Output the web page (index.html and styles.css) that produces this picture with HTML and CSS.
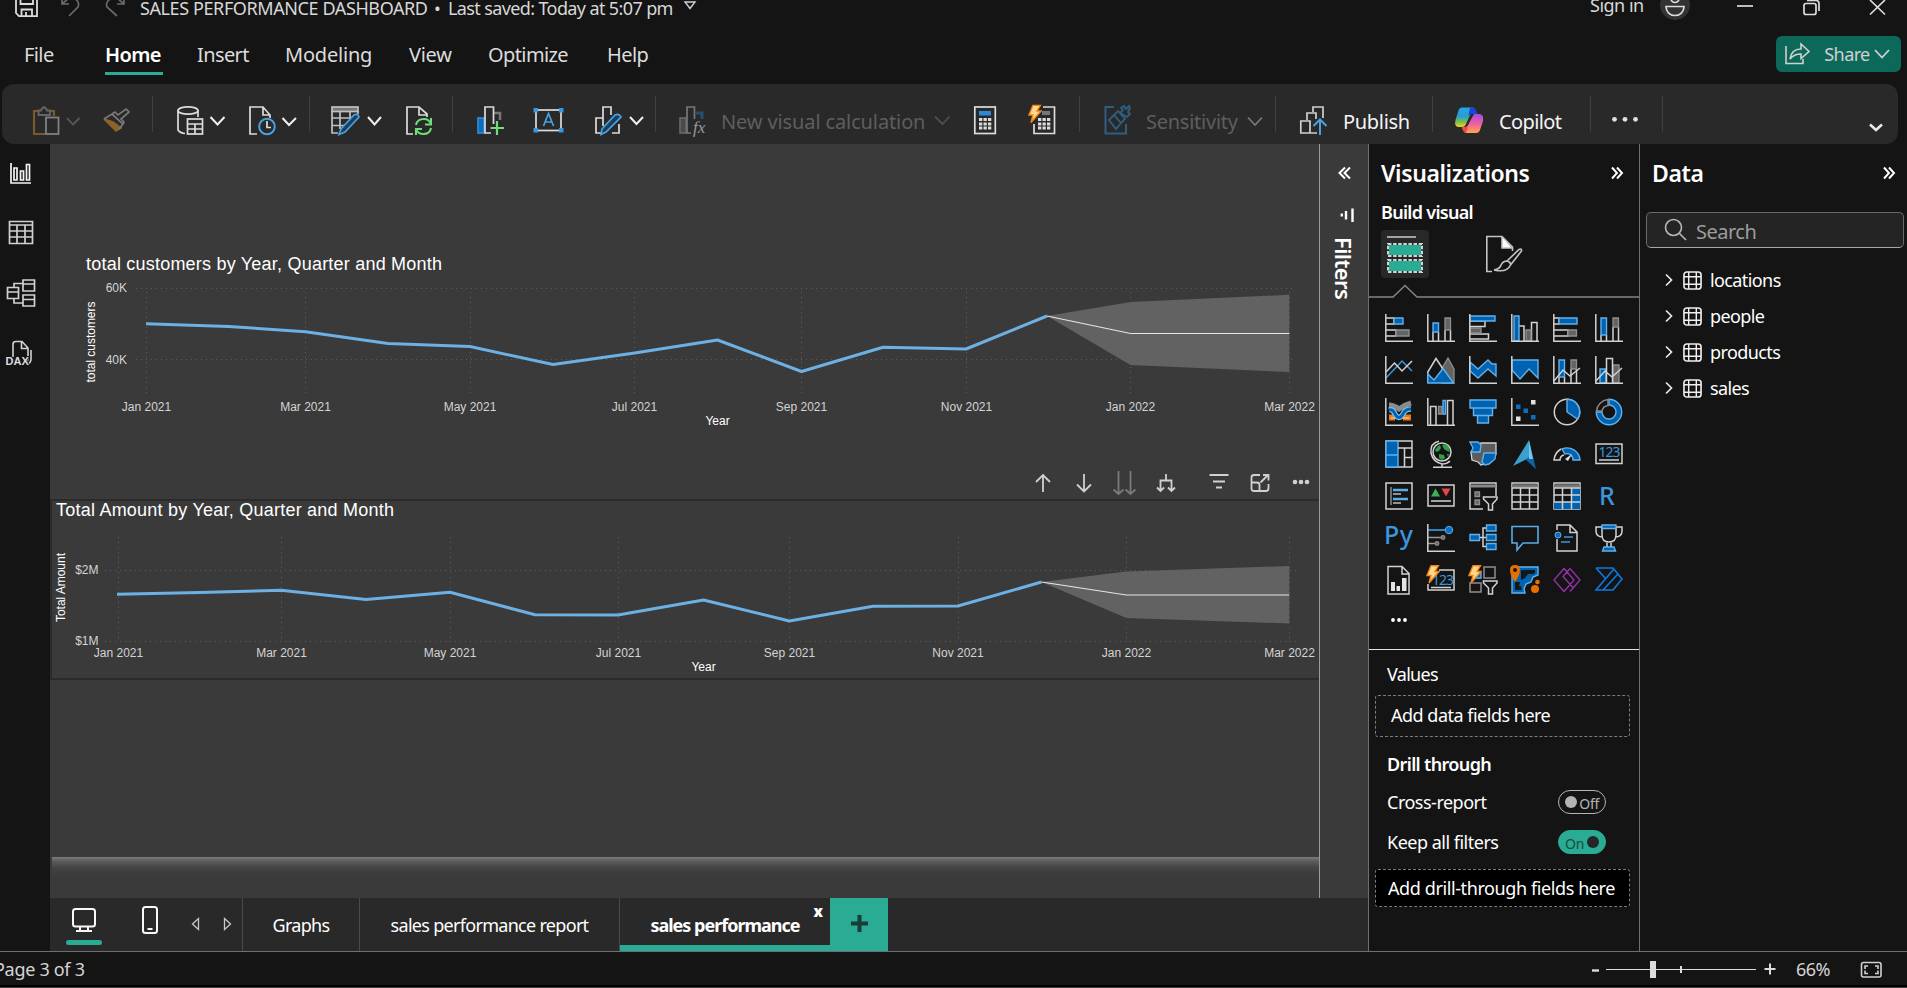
FILE: index.html
```html
<!DOCTYPE html>
<html lang="en">
<head>
<meta charset="utf-8">
<title>Sales Performance Dashboard</title>
<link rel="stylesheet" href="styles.css">
</head>
<body>
<svg class="defs" width="0" height="0">
  <defs>
    <symbol id="axis" viewBox="0 0 28 28"><path class="w" d="M.8 0V27.2H28"/></symbol>
    <symbol id="bolt" viewBox="0 0 14 19"><path d="M5 .7H12.5L9 6.5H13L3 18L5 10.500H1Z" fill="#ffd98c" stroke="#f0861a" stroke-width="1.4"/></symbol>
    <symbol id="tbl" viewBox="0 0 20 20"><rect x="1" y="1" width="18" height="18" rx="3" fill="none" stroke="#f0f0f0" stroke-width="1.7"/><path d="M1 6H19M1 14H19M6 1V19M14 1V19" stroke="#f0f0f0" stroke-width="1.5" fill="none"/></symbol>
    <linearGradient id="cpA" x1="0" y1="0" x2="0" y2="1"><stop offset="0" stop-color="#22a7f0"/><stop offset=".45" stop-color="#2b9bd0"/><stop offset=".75" stop-color="#7cc242"/><stop offset="1" stop-color="#f5d023"/></linearGradient>
    <linearGradient id="cpB" x1="0" y1="0" x2="0" y2="1"><stop offset="0" stop-color="#a04be8"/><stop offset=".5" stop-color="#ee5fa0"/><stop offset="1" stop-color="#ffa552"/></linearGradient>
  </defs>
</svg>
<div class="app">

  <header class="titlebar">
    <svg width="140" height="24" viewBox="0 0 140 24">
      <g fill="none" stroke="#dcdcdc" stroke-width="1.8"><path d="M16 -2V13L19 16.200H37V-2"/><path d="M20.500 -2V4H33V-2M21.500 16V9.500H32V16M26 12V16"/></g>
      <g fill="none" stroke="#6a6a6a" stroke-width="1.700"><path d="M62 -2V4H69M62 4L69 -2C76 -3 80 2 78 7L69 16"/><path d="M124 -2V4H117M124 4L117 -2C110 -3 105 2 107 7L117 16"/></g>
    </svg>
    <span class="doc-title">SALES PERFORMANCE DASHBOARD</span>
    <span class="doc-dot">•</span>
    <span class="doc-saved">Last saved: Today at 5:07 pm</span>
    <svg width="20" height="24" viewBox="680 0 20 24"><path d="M685 2H695L690 8.500Z" fill="none" stroke="#cfcfcf" stroke-width="1.400"/></svg>
    <span class="sign-in">Sign in</span>
    <svg width="257" height="24" viewBox="1650 0 257 24" fill="none" stroke="#dcdcdc" stroke-width="1.700">
      <circle cx="1675" cy="5" r="15" fill="#333" stroke="none"/><circle cx="1675" cy="-1.500" r="4"/><path d="M1666 6.500H1684C1684 12 1680 15.500 1675 15.500S1666 12 1666 6.500Z"/>
      <path d="M1737 6H1753"/><rect x="1804" y="3.500" width="12" height="11" rx="2"/><path d="M1807 .5H1816Q1819 .5 1819 3.500V11"/><path d="M1870 0L1885 14.500M1885 0L1870 14.500"/>
    </svg>
  </header>

  <nav class="menubar">
    <a class="m-file">File</a><a class="m-home">Home</a><a class="m-insert">Insert</a><a class="m-model">Modeling</a><a class="m-view">View</a><a class="m-opt">Optimize</a><a class="m-help">Help</a>
    <button class="share">
      <svg width="26" height="24" viewBox="0 0 26 24" fill="none" stroke="#d0d0d0" stroke-width="1.600"><path d="M1 4V21.500H18V17"/><path d="M5 17C6 10 10 7 16 7V2L24 9.500L16 16.500V12C11 12 8 13 5 17Z"/></svg>
      <span>Share</span>
      <svg width="18" height="12" viewBox="0 0 18 12" fill="none" stroke="#d0d0d0" stroke-width="1.800"><path d="M2 2L9 9.500L16 2"/></svg>
    </button>
  </nav>

  <div class="ribbon">
    <svg width="88" height="60" viewBox="2 84 88 60" fill="none" stroke-width="1.800">
      <path d="M38 111H34V134H45M50 111H54V116" stroke="#7a5a2a" stroke-width="2.200"/><path d="M38.500 115V110.500H41Q44 104 47 110.500H50V115Z" stroke="#666"/><rect x="46" y="117.500" width="12.500" height="16.500" stroke="#808080"/><path d="M67 118L73 124.500L79.500 118" stroke="#5a5a5a"/></svg>
    <svg width="62" height="60" viewBox="90 84 62 60" fill="none" stroke-width="1.700"><path d="M104 119L113 122L121 128L116 131Z" fill="#8a6428" stroke="#8a6428"/><path d="M104 119L112 114L123 124L119 129M112 114L115 112L118 115L126 109L129 112L121 119L124 122L122 125" stroke="#7a7a7a"/></svg>
    <i class="sep"></i>
    <svg width="82" height="60" viewBox="153 84 82 60" fill="none" stroke="#dcdcdc" stroke-width="1.700"><ellipse cx="188" cy="110.500" rx="10" ry="3.700"/><path d="M178 110.500V130Q180 133 185 133.500M198 110.500V117"/><rect x="187.500" y="119" width="15" height="15"/><path d="M187.500 124H202.500M187.500 129H202.500M195 124V134"/><path d="M210.500 117L217.500 124.500L224.500 117" stroke="#f0f0f0" stroke-width="2"/></svg>
    <svg width="74" height="60" viewBox="235 84 74 60" fill="none" stroke="#dcdcdc" stroke-width="1.700"><path d="M257 134H250V107H263L270 115V118M263 107V115H270"/><circle cx="267" cy="126.500" r="7.800" stroke="#4aa0e0" stroke-width="2"/><path d="M267 121V127.500H271" stroke="#dcdcdc"/><path d="M282.500 118L289 125L296 118" stroke="#f0f0f0" stroke-width="2"/></svg>
    <i class="sep"></i>
    <svg width="80" height="60" viewBox="310 84 80 60" fill="none" stroke="#c0c0c0" stroke-width="1.700"><rect x="332" y="107" width="26" height="4.500" fill="#777"/><path d="M332 111V133H338M332 118H352M332 125.500H345M340 112V129M350 112V120M358 111V114"/><path d="M341 129L354 115Q358 113 359 117L345 132L339 134.500Z" fill="#1d3f5c" stroke="#4aa0e0"/><path d="M368 117L374.500 124.500L381 117" stroke="#f0f0f0" stroke-width="2"/></svg>
    <svg width="62" height="60" viewBox="390 84 62 60" fill="none" stroke="#dcdcdc" stroke-width="1.700"><path d="M413 134H407V107H419L427 114V117M419 107V115H427"/><path d="M416 125Q417 119 424 119Q429 119 431 124M431 118V124.500H425M431 128Q430 134 423.500 134Q418 134 416 129.500M416 135V129H422" stroke="#6fdd78" stroke-width="2"/></svg>
    <i class="sep"></i>
    <svg width="65" height="60" viewBox="453 84 65 60" fill="none" stroke-width="1.700"><rect x="478" y="118" width="6" height="15" fill="#0f6cbd" stroke="#2d8ad8"/><path d="M494 113H500V120" stroke="#777" stroke-width="2.500"/><path d="M491 133H485V107H493.500V124" stroke="#dcdcdc"/><path d="M497 121V135M490.500 128H504" stroke="#6fdd78" stroke-width="2.200"/></svg>
    <svg width="62" height="60" viewBox="518 84 62 60" fill="none" stroke-width="1.700"><rect x="536" y="110" width="25" height="20.500" stroke="#dcdcdc"/><path d="M543.500 126L548.500 113.500L553.500 126M545 122H552" stroke="#4aa0e0"/><g fill="#3a96dd"><rect x="533.500" y="108" width="4.500" height="4.500"/><rect x="559" y="108" width="4.500" height="4.500"/><rect x="533.500" y="128" width="4.500" height="4.500"/><rect x="559" y="128" width="4.500" height="4.500"/></g></svg>
    <svg width="75" height="60" viewBox="580 84 75 60" fill="none" stroke="#dcdcdc" stroke-width="1.700"><path d="M601 133H596V118H603V107H611V115M612 133H619V124M603 118V126"/><path d="M602 129L615 115Q619 113 621 117L606 132L601 134.500Z" fill="#1d3f5c" stroke="#4aa0e0"/><path d="M630 117L636.500 124L643 117" stroke="#f0f0f0" stroke-width="2"/></svg>
    <i class="sep"></i>
    <svg width="65" height="60" viewBox="656 84 65 60" fill="none" stroke="#777" stroke-width="1.700"><rect x="680" y="118" width="6" height="15" fill="#4a4a4a" stroke="#666"/><path d="M691 133H687V107H694.500V119"/><path d="M696 113H702V119" stroke="#235070" stroke-width="3"/><text x="693" y="133" class="fx">fx</text></svg>
    <span class="r-text r-calc">New visual calculation</span>
    <svg width="30" height="60" viewBox="930 84 30 60" fill="none" stroke="#4f4f4f" stroke-width="1.800"><path d="M935 116.500L942.500 124L949.500 116.500"/></svg>
    <svg width="52" height="60" viewBox="960 84 52 60"><rect x="974.800" y="107" width="20.500" height="26.500" fill="none" stroke="#dcdcdc" stroke-width="1.700"/><rect x="979" y="111" width="12" height="4.500" fill="#2d8ad8"/><path d="M979 119.500H992M979 124H992M979 128H992" stroke="#dcdcdc" stroke-width="3" stroke-dasharray="3.300 1.200"/></svg>
    <svg width="67" height="60" viewBox="1012 84 67 60"><path d="M1043 107H1054.500V133.500H1034V124" fill="none" stroke="#dcdcdc" stroke-width="1.700"/><path d="M1042 113H1050" stroke="#777" stroke-width="4"/><path d="M1038 119.500H1051M1038 124H1051M1038 128H1051" stroke="#dcdcdc" stroke-width="3" stroke-dasharray="3.300 1.200"/><use href="#bolt" x="1028" y="104.500" width="14" height="19"/></svg>
    <i class="sep"></i>
    <svg width="66" height="60" viewBox="1080 84 66 60" fill="none" stroke="#2f5f80" stroke-width="2"><path d="M1114 107H1105.500V133.500H1126V124"/><path d="M1109 120L1114 115L1121 123L1116 129ZM1114 115L1118 111L1125 119L1121 123M1120 113L1123 110L1121 108L1124 106L1126 109L1129 106L1130 108L1128 112L1130 114L1127 117Z" stroke-width="1.800"/></svg>
    <span class="r-text r-sens">Sensitivity</span>
    <svg width="32" height="60" viewBox="1243 84 32 60" fill="none" stroke="#777" stroke-width="1.800"><path d="M1248 117.500L1255 125L1262 117.500"/></svg>
    <i class="sep"></i>
    <svg width="67" height="60" viewBox="1276 84 67 60" fill="none" stroke="#d0d0d0" stroke-width="1.700"><path d="M1313 112V107H1323V118M1307 120V113H1316V119M1300.800 121H1310V133H1300.800ZM1310 133H1317"/><path d="M1320 135V120M1313.500 126L1320 119.500L1326.500 126" stroke="#4aa0e0" stroke-width="2"/></svg>
    <span class="r-text r-pub">Publish</span>
    <i class="sep"></i>
    <svg width="66" height="60" viewBox="1433 84 66 60"><path d="M1462 107.500H1472Q1475 107.500 1476 112L1471 113L1466 124Q1465 127 1462 127H1458Q1454 126 1455.500 120L1458.500 110.500Q1459.500 107.500 1462 107.500Z" fill="url(#cpA)"/><path d="M1470 107.500H1473Q1476 108 1477.500 114H1472Q1468 114 1468 118Z" fill="#1548d0"/><path d="M1474 114H1480Q1484 115 1483 121L1480 130Q1479 133 1476 133H1466Q1463 132 1462 127Q1467 128 1468.500 124Z" fill="url(#cpB)"/><path d="M1462 127H1468L1466 133Q1463 132 1462 127Z" fill="#e8503a"/></svg>
    <span class="r-text r-cop">Copilot</span>
    <i class="sep"></i>
    <svg width="71" height="60" viewBox="1591 84 71 60" fill="#e0e0e0"><circle cx="1614.500" cy="119.300" r="2.400"/><circle cx="1625" cy="119.300" r="2.400"/><circle cx="1635.500" cy="119.300" r="2.400"/></svg>
    <i class="sep"></i>
    <svg width="232" height="60" viewBox="1663 84 232 60" fill="none" stroke="#e8e8e8" stroke-width="2.600"><path d="M1870 124.500L1876 130L1882 124.500"/></svg>
  </div>

  <main class="work">
    <aside class="rail">
      <svg width="50" height="58" viewBox="0 144 50 58" fill="none" stroke="#f4f4f4" stroke-width="1.700"><path d="M11 163V183H31"/><path d="M14 168H17V180H14ZM20.500 171H23.500V180H20.500ZM26.500 164.500H29.500V180H26.500Z"/></svg>
      <svg width="50" height="60" viewBox="0 202 50 60" fill="none" stroke="#d0d0d0" stroke-width="1.700"><path d="M9.500 221.500H32.500V243.500H9.500ZM9.500 225H32.500M9.500 231H32.500M9.500 237H32.500M17 225V243M25 225V243"/></svg>
      <svg width="50" height="62" viewBox="0 262 50 62" fill="none" stroke="#d0d0d0" stroke-width="1.700"><path d="M23 280H34.500V291H23ZM23 284H34.500M23 295H34.500V306H23ZM23 299.500H34.500M7.500 287.500H18.500V298.500H7.500ZM7.500 292H18.500M14 287V283.500H23M14 299V303H23"/></svg>
      <svg width="50" height="60" viewBox="0 324 50 60" fill="none" stroke="#d0d0d0" stroke-width="1.600"><path d="M13 357V344Q13 341.500 16 341.500H22L28 348V358Q28 362 25 363M21.500 342V348.500H28M31 350V359Q31 363 27 364.500"/><text x="5.500" y="364.500" class="dax">DAX</text></svg>
    </aside>

    <section class="center">
      <div class="stage">
        <div class="canvas">
          <svg class="chart" width="1269" height="355" viewBox="50 144 1269 355">
            <text class="c-title" x="86" y="270" textLength="356">total customers by Year, Quarter and Month</text>
            <path class="band" d="M1047 316L1130.500 302L1289.300 294.800V372L1130.500 365Z"/>
            <path class="grid" d="M136 288.500H1296M136 359.500H1296M146.500 292V397M305.500 292V397M470.500 292V397M634.500 292V397M801.500 292V397M966.500 292V397M1130.500 292V397M1289.500 292V397"/>
            <path class="series" d="M146 323.700L228.500 326.500L305.600 331.700L388 343.500L470 346.500L553 364.500L634.700 353L717.500 340L801.500 371.500L883 347.300L966 349L1047 316"/>
            <path class="fc" d="M1047 316L1130.500 333.500H1289.300"/>
            <g class="tick"><text x="127" y="292" class="end">60K</text><text x="127" y="364" class="end">40K</text>
            <text x="146.500" y="411">Jan 2021</text><text x="305.500" y="411">Mar 2021</text><text x="470" y="411">May 2021</text><text x="634.500" y="411">Jul 2021</text><text x="801.500" y="411">Sep 2021</text><text x="966.500" y="411">Nov 2021</text><text x="1130.500" y="411">Jan 2022</text><text x="1289.500" y="411">Mar 2022</text></g>
            <text class="axis-t" x="717.500" y="425">Year</text>
            <text class="axis-t" transform="translate(95 342) rotate(-90)" textLength="81">total customers</text>
          </svg>
          <svg class="chart picked" width="1269" height="181" viewBox="50 499 1269 181">
            <path d="M1319 500H51V679H1319" fill="none" stroke="#2b2b2b" stroke-width="2"/>
            <text class="c-title" x="56" y="516" textLength="338">Total Amount by Year, Quarter and Month</text>
            <path class="band" d="M1041.500 582L1126.300 571.500L1289.300 566V623.500L1126.300 618Z"/>
            <path class="grid" d="M105 570.500H1298M105 641.500H1298M118.500 537V642M281.500 537V642M450.500 537V642M618.500 537V642M789.500 537V642M958.500 537V642M1126.500 537V642M1289.500 537V642"/>
            <path class="series" d="M117 594.200L200 592.500L281 590.300L366 599.500L450 592.300L535 614.700L618 615L703.500 600L789.300 621L873 606.300L958 606L1041.500 582"/>
            <path class="fc" d="M1041.500 582L1126.300 595H1289.300"/>
            <g class="tick"><text x="98.500" y="574" class="end">$2M</text><text x="98.500" y="645" class="end">$1M</text>
            <text x="118.500" y="657">Jan 2021</text><text x="281.500" y="657">Mar 2021</text><text x="450" y="657">May 2021</text><text x="618.500" y="657">Jul 2021</text><text x="789.500" y="657">Sep 2021</text><text x="958" y="657">Nov 2021</text><text x="1126.500" y="657">Jan 2022</text><text x="1289.500" y="657">Mar 2022</text></g>
            <text class="axis-t" x="703.500" y="671">Year</text>
            <text class="axis-t" transform="translate(65 587.500) rotate(-90)" textLength="69">Total Amount</text>
          </svg>
          <svg class="hover-bar" width="290" height="30" viewBox="1025 468 290 30" fill="none" stroke="#d0d0d0" stroke-width="1.800">
            <path d="M1043 492V475M1036 482L1043 475L1050 482"/><path d="M1084 474V491M1077 484.500L1084 491.500L1091 484.500"/>
            <g stroke="#7a7a7a"><path d="M1118.500 471V494M1113.500 489.500L1118.500 494L1123.500 489.500M1130.500 471V494M1125.500 489.500L1130.500 494L1135.500 489.500"/></g>
            <path d="M1166 474V480.500M1160.500 491V480.500H1171.500V491M1157 487.500L1160.500 491L1164 487.500M1168 487.500L1171.500 491L1175 487.500"/>
            <path d="M1209.500 475H1228.500M1213 481.500H1225M1216 487.500H1222"/>
            <path d="M1260 475H1254Q1251.500 475 1251.500 477.500V488.500Q1251.500 491 1254 491H1266Q1268.500 491 1268.500 488V484M1251.500 482.500H1257Q1259.500 482.500 1259.500 485V491M1260.500 482.500L1268 475M1263 475H1268.500V480.500"/>
            <g fill="#d0d0d0" stroke="none"><circle cx="1295" cy="482" r="2.300"/><circle cx="1301" cy="482" r="2.300"/><circle cx="1307" cy="482" r="2.300"/></g>
          </svg>
          <div class="page-rest"></div>
          <div class="page-shadow"></div>
        </div>
        <aside class="filters">
          <svg width="48" height="93" viewBox="1320 144 48 93" fill="none" stroke="#fff" stroke-width="2"><path d="M1345 167.500L1339.500 173L1345 178.500M1350 167.500L1344.500 173L1350 178.500"/><path d="M1341.800 213.500V216.500M1346 211V219.500M1352.500 208.500V222" stroke-width="2.400"/></svg>
          <span class="filters-label">Filters</span>
        </aside>
      </div>
      <div class="tabs">
        <svg width="192" height="53" viewBox="50 898 192 53" fill="none" stroke="#f8f8f8" stroke-width="2"><rect x="73" y="909" width="22" height="17.500" rx="2.500"/><path d="M80 927V930M88 927V930M76 931H92"/><rect x="66" y="940" width="36" height="5" rx="2.500" fill="#2aab93" stroke="none"/><rect x="143" y="907" width="14" height="26" rx="2.500"/><path d="M147.500 929H152.500"/><g stroke-width="1.300" stroke="#c8c8c8"><path d="M198.500 918.500V929.500L192.500 924ZM224.500 918.500V929.500L230.500 924Z"/></g></svg>
        <span class="tab t1">Graphs</span>
        <span class="tab t2">sales performance report</span>
        <span class="tab t3 active">sales performance<b class="close">x</b></span>
        <span class="add"><svg width="58" height="53" viewBox="830 898 58 53"><path d="M859.500 915V932M851 923.500H868" stroke="#1b3d37" stroke-width="4"/></svg></span>
      </div>
    </section>

    <aside class="viz">
      <div class="pane-head"><h2 class="h-viz">Visualizations</h2><svg width="14" height="14" viewBox="0 0 14 14" fill="none" stroke="#fff" stroke-width="2"><path d="M2 1.500L7 7L2 12.500M7 1.500L12 7L7 12.500"/></svg></div>
      <h3 class="h-build">Build visual</h3>
      <svg width="270" height="78" viewBox="1369 224 270 78" fill="none">
        <rect x="1381" y="230" width="48" height="48" rx="4" fill="#282828"/>
        <path d="M1387 237H1416" stroke="#b0b0b0" stroke-width="1.800"/>
        <path d="M1389 245H1421V255H1389ZM1389 261H1421V271H1389Z" fill="#2aab93"/>
        <g stroke="#282828" stroke-width="2"><rect x="1388" y="244" width="34" height="12"/><rect x="1388" y="260" width="34" height="12"/></g>
        <g stroke="#d4d4d4" stroke-width="2" stroke-dasharray="3.500 1.600"><rect x="1388" y="244" width="34" height="12"/><rect x="1388" y="260" width="34" height="12"/></g>
        <g stroke="#c4c4c4" stroke-width="1.600"><path d="M1492 271.500H1486.800V236.500H1502L1512.500 247V251"/><path d="M1502 237V248H1512" fill="#fff"/><path d="M1507 261L1519 249.500Q1522 248 1521.500 251L1510.500 265M1507 261Q1511 262 1510.500 265Q1507 273 1494 270Q1500 269 1501 265Q1503 261 1507 261Z"/></g>
        <path d="M1369 297H1393L1405 285.500L1417 297H1639" stroke="#858585" stroke-width="1.500"/>
      </svg>
      <div class="gallery">
        <svg viewBox="0 0 28 28"><g><path class="e" d="M1 4H9V10H1M1 16H11V22H1"/><path class="b" d="M9 4H18V10H9Z"/><path class="g" d="M11 16H24V22H11Z"/></g><use href="#axis"/></svg>
        <svg viewBox="0 0 28 28"><path class="e" d="M6 18V27M11.500 18V27M18 16V27M23.500 16V27"/><path class="b" d="M6 9H11.500V18H6Z"/><path class="g" d="M18 4H23.500V16H18Z"/><use href="#axis"/></svg>
        <svg viewBox="0 0 28 28"><path class="e" d="M1 7H16V12.500H1M1 20H19.500V25H1"/><path class="g" d="M1 14H12V19H1Z"/><path class="b" d="M1 2H26V7H1Z"/><use href="#axis"/></svg>
        <svg viewBox="0 0 28 28"><path class="e" d="M8 12H13V27M20.500 27V8.500H26V27"/><path class="g" d="M15 16H20V27H15Z"/><path class="b" d="M3 2H8V27H3Z"/><use href="#axis"/></svg>
        <svg viewBox="0 0 28 28"><path class="e" d="M1 4H6V10H1M1 16H15V22H1"/><path class="b" d="M6 4H24V10H6Z"/><path class="g" d="M15 16H23.500V22H15Z"/><use href="#axis"/></svg>
        <svg viewBox="0 0 28 28"><path class="e" d="M6 21V27M11.500 21V27M18 13V27M23.500 13V27"/><path class="b" d="M6 4H11.500V21H6Z"/><path class="g" d="M18 4H23.500V13H18Z"/><use href="#axis"/></svg>

        <svg viewBox="0 0 28 28"><path class="bl" d="M1 22L17 5L27 15"/><path class="e" d="M1 16L9.500 7L17 15L27 5"/><use href="#axis"/></svg>
        <svg viewBox="0 0 28 28"><path class="g" d="M15 12L21 2L27 13V27H15Z"/><path class="e" d="M.8 27V16L9 2.500L16 13"/><path class="b" d="M.8 27V18L7 24L16 12.500L26.500 27Z"/></svg>
        <svg viewBox="0 0 28 28"><path class="b" d="M1 6L9 13L19 4L23 8H27V20L19 13L9 22L1 15Z"/><use href="#axis"/></svg>
        <svg viewBox="0 0 28 28"><path class="b" d="M1 4H27V22L18 13L9 23L1 14Z"/><use href="#axis"/></svg>
        <svg viewBox="0 0 28 28"><path class="e" d="M6 21V27M11.500 21V27M18 13V27M23.500 13V27"/><path class="b" d="M6 4H11.500V21H6Z"/><path class="g" d="M18 4H23.500V13H18Z"/><path class="e" d="M1 25L10 14L17 20L27 12"/><use href="#axis"/></svg>
        <svg viewBox="0 0 28 28"><path class="g" d="M18 9H24V27H18Z"/><path class="b" d="M5 13H11V27H5Z"/><path class="e" d="M11.500 27V2.500H17.500V27M1 25L10 15L17 21L27 12"/><use href="#axis"/></svg>

        <svg viewBox="0 0 28 28" fill="none"><path d="M4 20.500H10M18 20.500H26M4 18.500H26" stroke="#e87a1a" stroke-width="4"/><path d="M6 20H24" stroke="#ffc27a" stroke-width="1.400"/><path d="M4 7Q9 7 14 11Q19 7 26 5" stroke="#8a8a8a" stroke-width="5"/><path d="M4 12Q8 11 10 16Q14 23 18 16Q20 11 26 11" stroke="#7cc0f0" stroke-width="5.500"/><path d="M4 12Q8 11 10 16Q14 23 18 16Q20 11 26 11" stroke="#0063b1" stroke-width="3"/><use href="#axis"/></svg>
        <svg viewBox="0 0 28 28"><path class="e" d="M3.500 27V8.500H9V27M20.500 27V2.500H26V27"/><path class="g" d="M11.500 8.500H15V16H11.500Z"/><path class="b" d="M16 2.500H18.500V16H16Z"/><use href="#axis"/></svg>
        <svg viewBox="0 0 28 28"><path class="b" d="M1 2H27V10H1ZM4.500 10H23.500V17.500H4.500ZM8.500 17.500H19.500V25H8.500Z"/></svg>
        <svg viewBox="0 0 28 28"><path fill="#e0e0e0" d="M20 2H24.500V6.500H20ZM5 18.500H9.500V23H5Z"/><path fill="#0f6cc0" d="M5 6.500H9.500V11H5ZM12.500 10.500H17V15H12.500ZM20 17H24.500V21.500H20Z"/><use href="#axis"/></svg>
        <svg viewBox="0 0 28 28"><circle class="e" cx="14" cy="14" r="12.700"/><path class="b" d="M14 1.300A12.700 12.700 0 0 1 24.500 21L14 14Z"/></svg>
        <svg viewBox="0 0 28 28"><path class="b" d="M14 1.300A12.700 12.700 0 1 1 1.300 14H7A7 7 0 1 0 14 7Z"/><path d="M1.500 13A12.700 12.700 0 0 1 13 1.500V7.500A7 7 0 0 0 7 13Z" fill="none" stroke="#8a8a8a" stroke-width="1.500"/></svg>

        <svg viewBox="0 0 28 28"><rect class="e" x="1" y="1" width="26" height="26"/><path class="b" d="M1 1H13V27H1ZM1 15H13"/><path class="e" d="M13 8H27M19.500 8V27M19.500 17.500H27"/></svg>
        <svg viewBox="0 0 28 28"><circle class="e" cx="15" cy="12" r="9"/><path d="M8 10L11 6L13 5L14 8L12 11L9 12ZM15 5L19 4L22 7L23 12L20 11L17 9ZM12 14L17 15L18 18L15 20L12 18ZM20 14L22 14L21 17Z" fill="#2fa04a"/><path class="e" d="M12 1.300Q3 3 4 13Q6 22 15 24Q20 24 23 21M15 24V27M6 27.200H25"/></svg>
        <svg viewBox="0 0 28 28"><path class="m" d="M2 12L12 3L27 3V14L22 22L12 25L9 22L3 20Z"/><path class="b" d="M1 2H9L12 5L11 12H2L4 8Z"/><path class="b" d="M15 13H27L26 19L20 24L16 25L13 22Z"/></svg>
        <svg viewBox="0 0 28 28"><path d="M18 0L2 26L18 18Z" fill="#39a0cf"/><path d="M18 0L25 29L15 20L18 17Z" fill="#0b63ad"/><path d="M18 0L18 19L22 19Z" fill="#7cc6e6"/></svg>
        <svg viewBox="0 0 28 28"><path class="b" d="M9 9A13 13 0 0 1 27 20H20A6 6 0 0 0 12 14Z"/><path class="e" d="M8 9Q1.500 13 1 20H7Q7 16 11 15"/><path d="M12 19L19 14L15 21Z" fill="#e0e0e0"/></svg>
        <svg viewBox="0 0 28 28"><rect class="e" x="1" y="4" width="26" height="19.500"/><text x="3.500" y="17" class="n123">123</text><path class="e" d="M4 20H24"/></svg>

        <svg viewBox="0 0 28 28"><rect class="e" x="1" y="1" width="26" height="26"/><path d="M6 5V23" stroke="#888" stroke-width="1.500"/><path d="M8 8H23M8 17H23" stroke="#5aabe8" stroke-width="2.400"/><path d="M8 12H16M8 21H16" stroke="#bbb" stroke-width="1.500"/></svg>
        <svg viewBox="0 0 28 28"><rect class="e" x="1" y="3" width="26" height="21"/><path d="M4 14.500L8.500 6.500L13 14.500Z" fill="#3fae57"/><path d="M14.500 6.500H23.500L19 14.500Z" fill="#e0454a"/><path class="e" d="M4 19H24"/></svg>
        <svg viewBox="0 0 28 28"><path class="e" d="M14 27H1V1H27V14"/><path d="M1 4H27" stroke="#888" stroke-width="3"/><path class="g" d="M6 10H10.500V14.500H6ZM6 18H10.500V22.500H6Z"/><path class="e" d="M14.500 15H28V17L23.500 22V28H19.500V22L14.500 17Z"/></svg>
        <svg viewBox="0 0 28 28"><rect class="e" x="1" y="1" width="26" height="26"/><path d="M1 4H27" stroke="#777" stroke-width="3.500"/><path class="e" d="M1 6H27M1 13H27M1 20H27M9.500 6V27M18.500 6V27"/></svg>
        <svg viewBox="0 0 28 28"><rect class="e" x="1" y="1" width="26" height="26"/><path d="M1 4H27" stroke="#777" stroke-width="3.500"/><path fill="#0063b1" d="M18.500 6H27V27H1V20H18.500Z"/><path class="e" d="M1 6H27M1 13H27M1 20H27M9.500 6V27M18.500 6V27"/></svg>
        <svg viewBox="0 0 28 28"><text x="4" y="23" class="lang">R</text></svg>

        <svg viewBox="0 0 28 28"><text x="-1" y="20" class="lang" textLength="29">Py</text></svg>
        <svg viewBox="0 0 28 28"><path d="M1 6H18" stroke="#3a96dd" stroke-width="1.700"/><circle cx="22" cy="6" r="3.700" fill="#0f6cc0" stroke="#5aabe8"/><path d="M1 13.500H14M1 19.500H8" stroke="#999" stroke-width="1.500"/><circle cx="16" cy="13.500" r="1.800" class="g"/><circle cx="10" cy="19.500" r="1.800" class="g"/><use href="#axis"/></svg>
        <svg viewBox="0 0 28 28"><path class="e" d="M10 13.500H17M17 4H14V22.500H17"/><path class="b" d="M1 10.500H10.500V16.500H1ZM17.500 1H27V7H17.500ZM17.500 10.500H27V16.500H17.500ZM17.500 19.500H27V25.500H17.500Z"/></svg>
        <svg viewBox="0 0 28 28"><path d="M1 2.500H27V19H12L6 26V19H1Z" fill="none" stroke="#5aabe8" stroke-width="1.600"/></svg>
        <svg viewBox="0 0 28 28"><path class="e" d="M4 6V1H17L24 8V27H4V15M17 1V8.500H24"/><circle cx="5" cy="11" r="3" fill="#0f6cc0" stroke="#5aabe8"/><path d="M11 13H20M8 18H17" stroke="#3a96dd" stroke-width="1.600"/></svg>
        <svg viewBox="0 0 28 28"><path class="e" d="M7 3V11Q7 18 14 18T21 11V3M7 3H1V7Q1 13 8 13M21 3H27V7Q27 13 20 13M12 18V23M16 18V23"/><path class="b" d="M7 1H21V4.500H7ZM9 23H19L20.500 27H7.500Z"/></svg>

        <svg viewBox="0 0 28 28"><path class="e" d="M3 0.500H17L24 7.500V28H3ZM17 1V8H24" stroke-width="1.900"/><path fill="#e4e4e4" d="M6 16H10V25H6ZM11.500 20H15V25H11.500ZM17 12H21.500V25H17Z"/></svg>
        <svg viewBox="0 0 28 28"><path class="e" d="M12 4H27V24H1V18"/><text x="5" y="19" class="n123">123</text><path class="e" d="M4 21.500H24"/><use href="#bolt" x="-1" y="-1" width="14" height="19"/></svg>
        <svg viewBox="0 0 28 28"><path class="g2" d="M15 1H26V12H15ZM1 17H12V26H1Z"/><path class="b" d="M8 7H12V12H6Z"/><path class="e" d="M14.500 15H28V17L23.500 22V28H19.500V22L14.500 17Z"/><use href="#bolt" x="-1" y="-1" width="14" height="19"/></svg>
        <svg viewBox="0 0 28 28"><path class="b" d="M1 1H27V9L22 11L20 16L15 18L13 23L14 27H1Z"/><path d="M10 4H24V7L19 9L17 14L12 16L10 21L11 24H4V16H10Z" fill="#161616"/><path d="M17 8L21 8L18 14L13 16L11 21L8 20L10 14L14 12Z" fill="#0063b1"/><path d="M-1 4Q-1 -1 4 -1Q9 -1 9 4Q9 9 4 16Q-1 9 -1 4Z" fill="#e66f00"/><circle cx="4" cy="4" r="2" fill="#161616"/><circle cx="24" cy="23" r="4" fill="#e66f00"/><circle cx="26.500" cy="16" r="2.300" fill="#e66f00"/></svg>
        <svg viewBox="0 0 28 28"><path d="M11 2.500L1 14L11 25.500L21 14ZM17 2.500L27 14L17 25.500M11 2.500L13.500 5M17 2.500L10 10.500L20 21.500M11 25.500L13.500 23" fill="none" stroke="#9330a4" stroke-width="1.400" stroke-linejoin="round"/></svg>
        <svg viewBox="0 0 28 28"><path d="M1 2H18L27 13L18 24H1L19 3M1 2L11 13M8 24L23 8" fill="none" stroke="#0f78e0" stroke-width="1.600"/></svg>
        <svg viewBox="0 0 28 28" fill="#fff"><circle cx="8" cy="12" r="1.900"/><circle cx="14" cy="12" r="1.900"/><circle cx="20" cy="12" r="1.900"/></svg>
      </div>
      <div class="wells">
        <span class="w-values">Values</span>
        <div class="drop d-data"><span>Add data fields here</span></div>
        <h3 class="w-drill">Drill through</h3>
        <div class="w-row"><span class="w-cross">Cross-report</span><span class="toggle off"><i></i>Off</span></div>
        <div class="w-row"><span class="w-keep">Keep all filters</span><span class="toggle on">On<i></i></span></div>
        <div class="drop d-drill"><span>Add drill-through fields here</span></div>
      </div>
    </aside>

    <aside class="data">
      <div class="pane-head"><h2 class="h-data">Data</h2><svg width="14" height="14" viewBox="0 0 14 14" fill="none" stroke="#fff" stroke-width="2"><path d="M2 1.500L7 7L2 12.500M7 1.500L12 7L7 12.500"/></svg></div>
      <div class="search"><svg width="24" height="24" viewBox="0 0 24 24" fill="none" stroke="#b8b8b8" stroke-width="1.600"><circle cx="9.500" cy="9.500" r="8"/><path d="M15.500 15.500L22 22"/></svg><span>Search</span></div>
      <ul class="tables">
        <li><svg width="8" height="14" viewBox="0 0 8 14"><path class="chev" d="M1 1.500L6.500 7L1 12.500"/></svg><svg width="19" height="19"><use href="#tbl"/></svg><span>locations</span></li>
        <li><svg width="8" height="14" viewBox="0 0 8 14"><path class="chev" d="M1 1.500L6.500 7L1 12.500"/></svg><svg width="19" height="19"><use href="#tbl"/></svg><span>people</span></li>
        <li><svg width="8" height="14" viewBox="0 0 8 14"><path class="chev" d="M1 1.500L6.500 7L1 12.500"/></svg><svg width="19" height="19"><use href="#tbl"/></svg><span>products</span></li>
        <li><svg width="8" height="14" viewBox="0 0 8 14"><path class="chev" d="M1 1.500L6.500 7L1 12.500"/></svg><svg width="19" height="19"><use href="#tbl"/></svg><span>sales</span></li>
      </ul>
    </aside>
  </main>

  <footer class="status">
    <span class="page-no">Page 3 of 3</span>
    <svg width="206" height="34" viewBox="1584 952 206 34" fill="none" stroke="#dcdcdc"><path d="M1592 970.500H1599" stroke-width="2.400"/><path d="M1606 969.500H1756" stroke-width="1.200"/><path d="M1653 961V978" stroke-width="6"/><path d="M1681 966V973" stroke-width="2"/><path d="M1770 963.500V974.500M1764.500 969H1775.500" stroke-width="2"/></svg>
    <span class="pct">66%</span>
    <svg width="66" height="34" viewBox="1841 952 66 34" fill="none" stroke="#d0d0d0" stroke-width="1.600"><rect x="1861.500" y="962.500" width="19.500" height="14.500" rx="2"/><path d="M1868 966H1865V969M1875 966H1878V969M1868 973.500H1865V970.500M1875 973.500H1878V970.500"/></svg>
  </footer>
</div>
</body>
</html>
```
FILE: styles.css
```css
* { box-sizing: border-box; }
body { margin: 0; background: #141414; color: #fff; font-family: "Noto Sans", "Open Sans", sans-serif; }
svg { display: block; flex: none; }
span, a, h2, h3 { white-space: nowrap; }
h2, h3 { margin: 0; }
.defs { position: absolute; }
.app { width: 1907px; height: 988px; display: flex; flex-direction: column; background: #141414; }

/* title bar */
.titlebar { height: 24px; display: flex; font-size: 18px; line-height: 16px; color: #d8d8d8; flex: none; }
.doc-title { width: 294px; letter-spacing: -0.4px; }
.doc-dot { width: 14px; }
.doc-saved { width: 232px; letter-spacing: -0.62px; }
.sign-in { margin-left: auto; width: 60px; line-height: 11px; letter-spacing: -0.5px; }

/* menu */
.menubar { height: 60px; flex: none; display: flex; align-items: flex-start; padding-left: 24px; font-size: 20px; line-height: 28px; color: #dcdcdc; letter-spacing: -0.6px; }
.menubar a { margin-top: 17px; height: 34px; }
.m-file { width: 81px; }
.menubar .m-home { width: 58px; margin-right: 34px; font-weight: 600; color: #fff; border-bottom: 3px solid #2aab93; letter-spacing: -0.6px; }
.m-insert { width: 88px; }
.m-model { width: 124px; letter-spacing: -0.2px; }
.m-view { width: 79px; letter-spacing: -0.3px; }
.m-opt { width: 119px; }
.share { margin: 12px 6px 0 auto; width: 125px; height: 36px; border: 0; border-radius: 6px; background: #0c695a; display: flex; align-items: center; padding: 0 0 0 9px; color: #d0d0d0; font: 18px "Noto Sans", sans-serif; letter-spacing: -0.6px; }
.share span { width: 52px; margin-left: 10px; }

/* ribbon */
.ribbon { height: 60px; width: 1896px; margin-left: 2px; flex: none; display: flex; background: #292929; border-radius: 12px; position: relative; z-index: 1; }
.sep { flex: 0 0 1px; height: 36px; margin-top: 12px; background: #404040; }
.r-text { font-size: 20px; line-height: 30px; padding-top: 23px; color: #f4f4f4; letter-spacing: -0.6px; flex: none; }
.r-calc { width: 209px; color: #5e5e5e; letter-spacing: -0.12px; }
.r-sens { width: 97px; color: #5e5e5e; letter-spacing: -0.25px; }
.r-pub { width: 89px; letter-spacing: -0.3px; }
.r-cop { width: 91px; }
.fx { font: italic 17px "Liberation Serif", serif; fill: #999; stroke: none; }

/* work area */
.work { height: 808px; display: flex; flex: none; border-bottom: 1px solid #6e6e6e; }
.rail { flex: 0 0 50px; background: #141414; }
.dax { font: bold 11px "Liberation Sans", sans-serif; fill: #dcdcdc; stroke: #141414; stroke-width: 2px; paint-order: stroke; }
.center { flex: 0 0 1318px; display: flex; flex-direction: column; }
.stage { height: 754px; display: flex; }
.canvas { position: relative; width: 1269px; background: #3a3a3a; display: flex; flex-direction: column; }
.hover-bar { position: absolute; right: 4px; top: 324px; }
.page-rest { height: 177px; }
.page-shadow { height: 41px; margin-left: 2px; background: linear-gradient(#7c7c7c 0, #5c5c5c 4px, #464646 10px, #3c3c3c 17px, #3a3a3a 24px); }
.filters { width: 49px; background: #3a3a3a; border-left: 1px solid #9a9a9a; }
.filters-label { writing-mode: vertical-rl; font-size: 22px; font-weight: 600; line-height: 30px; margin-left: 9px; letter-spacing: -0.6px; }

/* charts */
.c-title { font: 18px "Liberation Sans", Arial, sans-serif; fill: #fff; }
.tick text { font: 12px "Liberation Sans", Arial, sans-serif; fill: #d4d4d4; text-anchor: middle; }
.tick .end { text-anchor: end; }
.axis-t { font: 12px "Liberation Sans", Arial, sans-serif; fill: #fff; text-anchor: middle; }
.grid { fill: none; stroke: #5e5e5e; stroke-width: 1; stroke-dasharray: 1 4; }
.series { fill: none; stroke: #6cb0e4; stroke-width: 3; stroke-linejoin: round; }
.band { fill: #626262; }
.fc { fill: none; stroke: #e6e6e6; stroke-width: 1.2; }

/* page tabs */
.tabs { height: 53px; background: #292929; display: flex; font-size: 18px; letter-spacing: -0.7px; }
.tab { border-left: 1px solid #4a4a4a; height: 53px; line-height: 54px; text-align: center; }
.t1 { width: 117px; }
.t2 { width: 260px; }
.t3 { width: 211px; position: relative; font-weight: 700; box-shadow: inset 0 -6px #2aab93; letter-spacing: -1px; }
.close { position: absolute; right: 8px; top: 5px; font-size: 15px; line-height: 16px; }
.add { background: #2aab93; }

/* visualizations */
.viz { flex: 0 0 271px; border-left: 1px solid #6e6e6e; border-right: 0; }
.pane-head { display: flex; justify-content: space-between; align-items: center; height: 58px; }
.pane-head h2 { font-size: 23px; font-weight: 600; letter-spacing: -0.4px; }
.viz .pane-head { padding: 0 15px 0 12px; }
.h-build { font-size: 18px; font-weight: 600; line-height: 24px; height: 22px; margin: -2px 0 2px 12px; letter-spacing: -0.7px; }
.gallery { display: grid; grid-template-columns: repeat(6, 28px); gap: 14px; padding: 12px 0 0 16px; height: 347px; align-content: start; }
.gallery svg { width: 28px; height: 28px; overflow: visible; }
.w, .e { fill: none; stroke: #d2d2d2; stroke-width: 1.5; }
.b { fill: #0063b1; stroke: #63b0ea; stroke-width: 1.4; }
.bl { fill: none; stroke: #3a96dd; stroke-width: 1.5; }
.g { fill: #636363; stroke: #8e8e8e; stroke-width: 1.3; }
.g2 { fill: none; stroke: #8e8e8e; stroke-width: 1.5; }
.m { fill: #5c5c5c; stroke: #d2d2d2; stroke-width: 1.3; }
.n123 { font: 14px "Noto Sans", sans-serif; fill: #3a96dd; letter-spacing: -1px; }
.lang { font: 500 25px "Noto Sans", sans-serif; fill: #3a96dd; }
.wells { border-top: 1px solid #e4e4e4; padding: 12px 9px 0 6px; font-size: 18px; letter-spacing: -0.5px; display: flex; flex-direction: column; }
.w-values { line-height: 24px; margin-left: 12px; letter-spacing: -0.7px; }
.drop { border: 1px dashed #7c7c7c; border-radius: 3px; width: 255px; display: flex; align-items: center; }
.d-data { height: 42px; margin-top: 9px; padding: 0 0 3px 15px; }
.w-drill { font-size: 18px; font-weight: 600; line-height: 24px; margin: 15px 0 6px 12px; letter-spacing: -0.65px; }
.w-row { display: flex; justify-content: space-between; align-items: center; height: 40px; margin: 0 24px 0 12px; }
.toggle { width: 48px; height: 24px; border-radius: 12px; border: 1px solid #b4b4b4; display: flex; align-items: center; font-size: 14px; color: #b4b4b4; padding: 2px 6px 0; justify-content: space-between; letter-spacing: -0.3px; }
.toggle i { width: 12px; height: 12px; border-radius: 50%; background: #b4b4b4; margin-top: -2px; }
.toggle.on { background: #2aab93; border-color: #2aab93; color: #1c4a42; }
.toggle.on i { background: #262626; }
.d-drill { height: 38px; margin-top: 7px; background: #000; padding-left: 12px; letter-spacing: -0.4px; }

/* data */
.data { flex: 0 0 268px; border-left: 1px solid #6e6e6e; }
.data .pane-head { padding: 0 11px 0 12px; }
.search { margin: 10px 0 14px 6px; width: 258px; height: 36px; border: 1px solid #6a6a6a; border-bottom-color: #a8a8a8; border-radius: 5px; background: #242424; display: flex; align-items: center; padding-left: 17px; gap: 8px; color: #9c9c9c; font-size: 20px; letter-spacing: -0.5px; }
.search span { padding-top: 2px; }
.tables { list-style: none; margin: 0; padding: 0 0 0 25px; font-size: 18px; letter-spacing: -0.6px; }
.tables li { height: 36px; display: flex; align-items: center; }
.tables li svg + svg { margin: 0 8px 0 10px; }
.chev { fill: none; stroke: #e8e8e8; stroke-width: 1.7; }

/* status bar */
.status { height: 36px; display: flex; flex: none; font-size: 18px; line-height: 35px; color: #d4d4d4; letter-spacing: -0.6px; border-bottom: 1px solid #3c3c3c; box-shadow: inset 0 -2px #000; overflow: hidden; }
.page-no { width: 1590px; margin-left: -6px; letter-spacing: -0.3px; }
.pct { width: 45px; margin-left: 6px; line-height: 34px; }
```
